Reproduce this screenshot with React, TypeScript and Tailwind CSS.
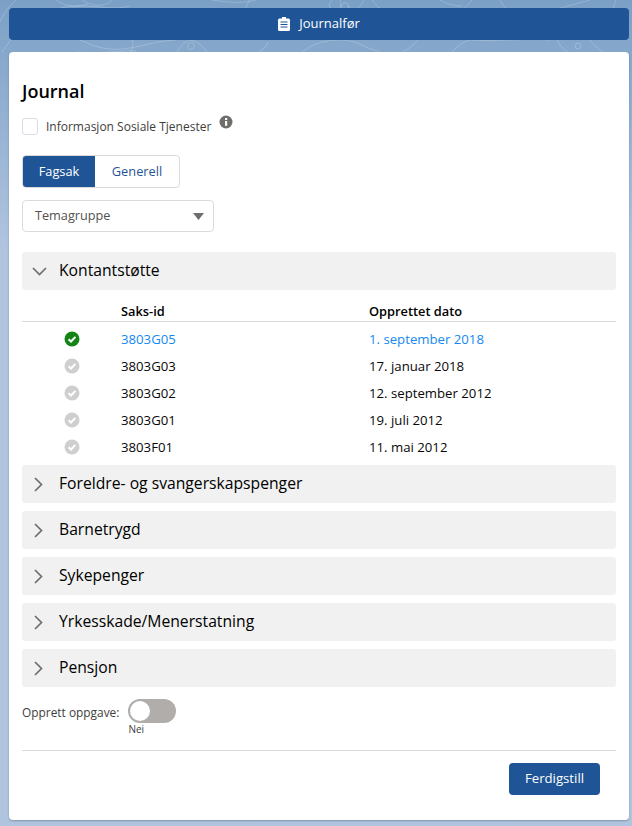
const font = "font-['Open_Sans','Noto_Sans',sans-serif]";

const ROWS = [
  { id: "3803G05", date: "1. september 2018", active: true },
  { id: "3803G03", date: "17. januar 2018", active: false },
  { id: "3803G02", date: "12. september 2012", active: false },
  { id: "3803G01", date: "19. juli 2012", active: false },
  { id: "3803F01", date: "11. mai 2012", active: false },
];

const CLOSED = ["Foreldre- og svangerskapspenger", "Barnetrygd", "Sykepenger", "Yrkesskade/Menerstatning", "Pensjon"];

function CheckDot({ active }: { active: boolean }) {
  return (
    <svg width="16" height="16" viewBox="0 0 16 16">
      <circle cx="8" cy="8" r="7.5" fill={active ? "#148414" : "#cfcfcf"} />
      <path d="M4.6 8.2 7 10.5l4.4-4.6" fill="none" stroke="#fff" strokeWidth="2" />
    </svg>
  );
}

function Clipboard() {
  return (
    <svg width="12" height="14" viewBox="0 0 12 14" fill="#fff">
      <path d="M4 0h4v1.500h2.500A1.500 1.500 0 0 1 12 3v9.500a1.500 1.500 0 0 1-1.500 1.500h-9A1.500 1.500 0 0 1 0 12.500V3a1.500 1.500 0 0 1 1.500-1.500H4z" />
      <path d="M2.500 5h7M2.500 7.500h7M2.500 10h7" stroke="#1f5596" strokeWidth="1" />
    </svg>
  );
}

// background contour lines behind the top bar
function Contours() {
  return (
    <svg className="absolute left-0 top-0" width="632" height="60" fill="none" stroke="#ffffff" strokeOpacity="0.2">
      <path d="M0 22C4 12 10 6 16 0M2 52C8 44 14 36 18 24" />
      <path d="M56 0c8 6 18 8 32 4M60 8c30-6 50 4 70-2" />
      <path d="M80 40c14 6 26 12 50 8s20-6 46-8M76 52c30 2 40-2 60-1" />
      <path d="M112 0c-8 8-20 6-30 0M132 40c2 6 1 10-4 14" />
      <path d="M176 54c4-8 8-12 14-14 10 2 14 8 18 14" />
      <path d="M212 0c14 2 30 4 44 0M246 24c-4-10 0-18 4-24" />
      <path d="M268 42c-2 6-8 10-12 12M300 54c8-8 22-14 40-14s24 8 40 12" />
      <path d="M332 0c-4 4-4 8 2 10s8-4 6-10M348 6c4 4 10 6 16-6" />
      <path d="M372 0c10 14 30 24 60 20s34-14 40-20" />
      <path d="M440 0c8 4 14 6 22 6M400 54c10-6 14-10 18-14" />
      <path d="M450 54c8-8 12-12 20-14 30 2 50-2 80 0" />
      <path d="M500 0c4 8 12 16 30 14s30-6 60-14" />
      <path d="M570 54c-8-6-12-10-12-14M590 40c4 6 12 12 16 14M616 0c-4 10-4 18 4 24" />
      <circle cx="191" cy="46" r="3.500" />
      <circle cx="345" cy="6" r="3.500" />
      <circle cx="578" cy="46" r="3" />
    </svg>
  );
}

export default function App() {
  return (
    <div className={`${font} relative h-[826px] w-[632px] overflow-hidden bg-gradient-to-b from-[#7ba0c6] to-[#b0c4df] to-[30%] pl-[9px] pr-[3px] pt-[8px] text-[#080707]`}>
      <Contours />
      <button className="relative flex h-[32px] w-full items-center justify-center gap-[9px] rounded-[4px] bg-[#1f5596] text-[13px] text-white">
        <Clipboard />
        Journalfør
      </button>

      <div className="relative mt-[12px] h-[768px] rounded-[4px] bg-white px-[13px] pt-[27px] shadow-[0_1px_2px_rgba(0,0,0,0.25)]">
        <h1 className="text-[18px] font-semibold leading-[24px] text-black">Journal</h1>

        <div className="mt-[15px] flex items-start">
          <span className="h-[17px] w-[16px] rounded-[3px] border border-[#d8dde6] bg-white" />
          <span className="ml-[8px] text-[12px] leading-[17px] text-[#3e3e3c]">Informasjon Sosiale Tjenester</span>
          <svg className="ml-[8px] -mt-[3px]" width="14" height="14" viewBox="0 0 14 14">
            <circle cx="7" cy="7" r="6.500" fill="#706e6b" />
            <rect x="6" y="6" width="2.200" height="4.800" fill="#fff" />
            <rect x="6" y="3" width="2.200" height="2" fill="#fff" />
          </svg>
        </div>

        <div className="mt-[20px] flex h-[33px] w-[158px] overflow-hidden rounded-[4px] border border-[#dddbda] text-[12.800px]">
          <div className="flex w-[72px] items-center justify-center bg-[#1f5596] font-medium text-white">Fagsak</div>
          <div className="flex flex-1 items-center justify-center text-[#1f5596]">Generell</div>
        </div>

        <div className="mt-[12px] flex h-[32px] w-[192px] items-center justify-between rounded-[4px] border border-[#dddbda] pl-[12px] pr-[9px] text-[12.700px] text-[#54514f]">
          Temagruppe
          <svg width="11" height="7" viewBox="0 0 11 7"><path d="M0 0h11L5.500 7z" fill="#706e6b" /></svg>
        </div>

        <div className="mt-[20px] flex h-[38px] items-center rounded-[3px] bg-[#f1f1f1] text-[15.700px] text-black">
          <svg className="ml-[10px] mr-[12px]" width="15" height="9" viewBox="0 0 15 9" fill="none" stroke="#706e6b" strokeWidth="1.700">
            <path d="M1 1l6.500 6.500L14 1" />
          </svg>
          Kontantstøtte
        </div>

        <div className="mt-[12px] flex h-[20px] border-b border-[#dddbda] pl-[99px] text-[12.800px] font-semibold text-black">
          <span className="w-[248px]">Saks-id</span>
          <span>Opprettet dato</span>
        </div>

        <div className="mt-[3px]">
          {ROWS.map((row) => (
            <div key={row.id} className={`flex h-[27px] items-center text-[13.200px] ${row.active ? "text-[#1589ee]" : "text-[#080707]"}`}>
              <span className="ml-[42px] mr-[41px] flex">
                <CheckDot active={row.active} />
              </span>
              <span className="w-[248px] pt-[3px]">{row.id}</span>
              <span className="pt-[3px]">{row.date}</span>
            </div>
          ))}
        </div>

        <div className="mt-[5px] flex flex-col gap-[8px]">
          {CLOSED.map((name) => (
            <div key={name} className="flex h-[38px] items-center rounded-[3px] bg-[#f1f1f1] text-[15.700px] text-black">
              <svg className="ml-[12px] mr-[16px]" width="9" height="15" viewBox="0 0 9 15" fill="none" stroke="#706e6b" strokeWidth="1.700">
                <path d="M1 1l6.500 6.500L1 14" />
              </svg>
              {name}
            </div>
          ))}
        </div>

        <div className="mt-[12px] flex">
          <span className="mt-[5px] text-[11.900px] leading-[16px] text-[#3e3e3c]">Opprett oppgave:</span>
          <div className="ml-[9px]">
            <div className="flex h-[24px] w-[48px] items-center rounded-full bg-[#b0adab] pl-[2px]">
              <span className="h-[20px] w-[20px] rounded-full bg-white" />
            </div>
            <div className="text-[10px] leading-[13px] text-[#3e3e3c]">Nei</div>
          </div>
        </div>

        <div className="mt-[14px] border-t border-[#dddbda]" />

        <div className="mt-[12px] flex justify-end pr-[16px]">
          <button className="h-[32px] w-[91px] rounded-[4px] bg-[#1f5596] text-[13.200px] text-white">Ferdigstill</button>
        </div>
      </div>
    </div>
  );
}
